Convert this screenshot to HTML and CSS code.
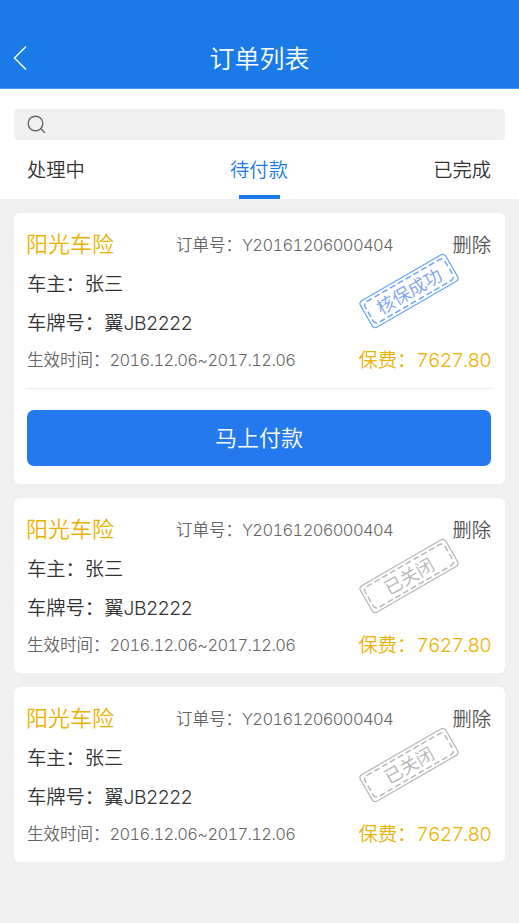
FILE: index.html
```html
<!DOCTYPE html>
<html lang="zh-CN">
<head>
<meta charset="utf-8">
<title>订单列表</title>
<link rel="stylesheet" href="styles.css">
</head>
<body>
<header class="header">
  <svg class="back" viewBox="0 0 16 26"><path d="M13 1.5L1.5 13L13 24.5"/></svg>
  <h1>订单列表</h1>
</header>
<section class="top">
  <div class="search"><svg viewBox="0 0 20 20"><circle cx="8.5" cy="8.5" r="7.3"/><path d="M13.6 13.6L17.8 17.8"/></svg></div>
  <nav class="tabs"><span>处理中</span><span class="active">待付款</span><span>已完成</span></nav>
</section>
<main class="list">
  <article class="card">
    <div class="row head"><h2>阳光车险</h2><span class="order">订单号：<span class="num">Y20161206000404</span></span><span class="del">删除</span></div>
    <p class="line">车主：<span>张三</span></p>
    <p class="line">车牌号：<span>翼<span class="plate">JB2222</span></span></p>
    <div class="row foot"><span class="time">生效时间：<span class="num">2016.12.06~2017.12.06</span></span><span class="fee">保费：<span class="num">7627.80</span></span></div>
    <div class="pay"><button>马上付款</button></div>
    <div class="stamp ok"><svg viewBox="0 0 100 32"><rect x=".6" y=".6" width="98.8" height="30.8" rx="4"/><rect class="inner" x="4" y="4" width="92" height="24" rx="4"/></svg><span>核保成功</span></div>
  </article>
  <article class="card">
    <div class="row head"><h2>阳光车险</h2><span class="order">订单号：<span class="num">Y20161206000404</span></span><span class="del">删除</span></div>
    <p class="line">车主：<span>张三</span></p>
    <p class="line">车牌号：<span>翼<span class="plate">JB2222</span></span></p>
    <div class="row foot"><span class="time">生效时间：<span class="num">2016.12.06~2017.12.06</span></span><span class="fee">保费：<span class="num">7627.80</span></span></div>
    <div class="stamp"><svg viewBox="0 0 100 32"><rect x=".6" y=".6" width="98.8" height="30.8" rx="4"/><rect class="inner" x="4" y="4" width="92" height="24" rx="4"/></svg><span>已关闭</span></div>
  </article>
  <article class="card">
    <div class="row head"><h2>阳光车险</h2><span class="order">订单号：<span class="num">Y20161206000404</span></span><span class="del">删除</span></div>
    <p class="line">车主：<span>张三</span></p>
    <p class="line">车牌号：<span>翼<span class="plate">JB2222</span></span></p>
    <div class="row foot"><span class="time">生效时间：<span class="num">2016.12.06~2017.12.06</span></span><span class="fee">保费：<span class="num">7627.80</span></span></div>
    <div class="stamp"><svg viewBox="0 0 100 32"><rect x=".6" y=".6" width="98.8" height="30.8" rx="4"/><rect class="inner" x="4" y="4" width="92" height="24" rx="4"/></svg><span>已关闭</span></div>
  </article>
</main>
</body>
</html>
```
FILE: styles.css
```css
* { box-sizing: border-box; }
body { margin: 0; min-height: 923px; background: #f0f0f0; color: #333; font-family: Inter, "Noto Sans CJK SC", sans-serif; font-weight: 350; }
h1, h2, p { margin: 0; font-weight: inherit; }
.header { height: 89px; padding: 28px 13px 0; display: grid; grid-template-columns: 16px 1fr 16px; align-items: center; background: #1a7be8; color: #fff; border-bottom: 1px solid #4795ed; }
.header h1 { text-align: center; font-size: 25px; line-height: 36px; padding-top: 1px; }
svg { fill: none; display: block; }
.back { width: 16px; height: 26px; stroke: #fff; stroke-width: 1.4; }
.top { height: 110px; padding: 20px 14px 0; background: #fff; }
.search { height: 31px; border-radius: 4px; background: #f0f0f0; padding: 6px 13px; }
.search svg { width: 20px; height: 20px; stroke: #666; stroke-width: 1.4; }
.tabs { display: flex; justify-content: space-between; height: 59px; padding: 0 14px 0 13px; font-size: 19.3px; line-height: 61px; }
.tabs .active { color: #1a7be8; display: flex; flex-direction: column; align-items: center; }
.tabs .active::after { content: ""; width: 41px; height: 4px; margin-top: -6px; background: #1a7be8; }
.list { padding: 14px; display: flex; flex-direction: column; gap: 14px; }
.card { position: relative; height: 175px; padding: 12px 14px 0 13px; background: #fff; border-radius: 6px; white-space: nowrap; }
.card:first-child { height: 271px; }
.row { display: flex; align-items: center; }
.head { height: 39px; padding-bottom: 1px; }
.head h2 { width: 150px; font-size: 22px; line-height: 38px; color: #e9b200; margin-left: -1px; }
.order { font-size: 16.5px; color: #666; }
.num { font-variant-numeric: tabular-nums; }
.order .num { letter-spacing: -.62px; }
.time .num { letter-spacing: -.64px; }
.fee .num { letter-spacing: -.75px; }
.plate { letter-spacing: -.3px; }
.del { margin-left: auto; font-size: 19.3px; color: #555; }
.line { height: 39px; line-height: 41px; font-size: 19.3px; }
.foot { height: 36px; padding-bottom: 2px; justify-content: space-between; }
.time { font-size: 16.5px; color: #666; }
.fee { font-size: 19.3px; color: #e9b200; }
.pay { margin-top: 10px; padding-top: 21px; border-top: 1px solid #e9e9e9; }
.pay button { display: block; width: 100%; height: 56px; padding: 0 0 5px; border: 0; border-radius: 7px; background: #2479ee; color: #fff; font: inherit; font-size: 22px; }
.stamp { position: absolute; left: 345px; top: 62px; width: 100px; height: 32px; transform: rotate(-30deg); color: #b5b5b5; font-size: 18px; line-height: 33px; text-align: center; }
.stamp svg { position: absolute; inset: 0; stroke: currentColor; stroke-width: 1.4; }
.stamp .inner { stroke-dasharray: 6 3; }
.ok { color: #65a4f2; }
.ok span { color: #7ba3f0; }
```
